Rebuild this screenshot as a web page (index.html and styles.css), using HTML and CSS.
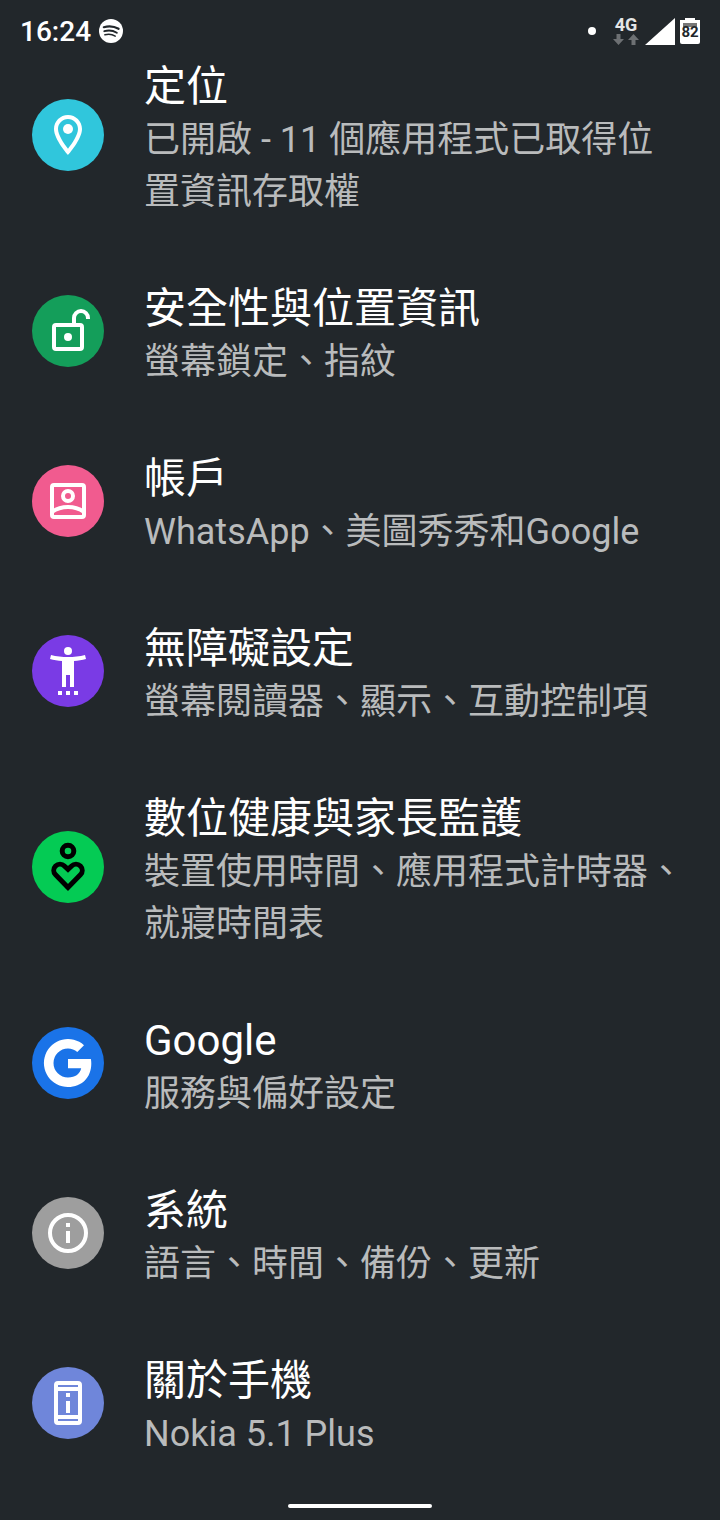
FILE: index.html
```html
<!DOCTYPE html>
<html lang="zh-TW">
<head>
    <meta charset="UTF-8">
    <meta name="viewport" content="width=device-width, initial-scale=1.0">
    <title>設定</title>
    <link rel="stylesheet" href="styles.css">
</head>
<body>
    <header class="status-bar">
        <span class="clock">16:24</span>
        <svg class="spotify" viewBox="0 0 24 24">
            <circle cx="12" cy="12" r="12" fill="#fff"/>
            <g class="waves">
                <path d="M4.8 8.2c5-1.4 10.4-.9 14.8 1.6" stroke-width="2.2"/>
                <path d="M5.3 12.2c4.2-1.2 8.8-.7 12.5 1.5" stroke-width="1.9"/>
                <path d="M5.9 15.8c3.6-.9 7.2-.6 10.3 1.3" stroke-width="1.5"/>
            </g>
        </svg>

        <div class="status-right">
            <span class="dot"></span>
            <div class="network">
                <span class="network-type">4G</span>
                <svg class="arrows" viewBox="0 0 26 11">
                    <path d="M3.500 0h4v5H11l-5.500 6L0 5h3.500z"/>
                    <path d="M18.500 11h4V6H26l-5.500-6L15 6h3.500z"/>
                </svg>
            </div>
            <svg class="signal" viewBox="0 0 30 27">
                <path d="M30 0v27H0z" fill="#fff"/>
            </svg>
            <div class="battery">82</div>
        </div>
    </header>

    <main class="settings-list">
        <a class="item" href="#location">
            <span class="icon location">
                <svg viewBox="0 0 24 24">
                    <path d="M12 2C8.13 2 5 5.13 5 9c0 5.25 7 13 7 13s7-7.75 7-13c0-3.87-3.13-7-7-7zM7 9c0-2.76 2.24-5 5-5s5 2.24 5 5c0 2.88-2.88 7.19-5 9.88C9.92 16.21 7 11.85 7 9z"/>
                    <circle cx="12" cy="9" r="2.5"/>
                </svg>
            </span>
            <span class="text">
                <span class="title">定位</span>
                <span class="summary">已開啟 - 11 個應用程式已取得位置資訊存取權</span>
            </span>
        </a>

        <a class="item" href="#security">
            <span class="icon security">
                <svg viewBox="0 0 24 24">
                    <rect class="line" x="5" y="9" width="14" height="12" rx="1"/>
                    <path class="line" d="M15 9V5.5a3.5 3.5 0 0 1 7 0V6"/>
                    <circle cx="12" cy="15" r="2"/>
                </svg>
            </span>
            <span class="text">
                <span class="title">安全性與位置資訊</span>
                <span class="summary">螢幕鎖定、指紋</span>
            </span>
        </a>

        <a class="item" href="#accounts">
            <span class="icon accounts">
                <svg viewBox="0 0 24 24">
                    <rect class="line" x="4" y="4" width="16" height="16" rx="1"/>
                    <circle class="line" cx="12" cy="9.5" r="2.5"/>
                    <path class="line" d="M4 17.5c4.500-3.300 11.500-3.300 16 0"/>
                </svg>
            </span>
            <span class="text">
                <span class="title">帳戶</span>
                <span class="summary">WhatsApp、美圖秀秀和Google</span>
            </span>
        </a>

        <a class="item" href="#accessibility">
            <span class="icon accessibility">
                <svg viewBox="0 0 24 24">
                    <circle cx="12" cy="2" r="2"/>
                    <path d="M20.5 4c-2.61.7-5.67 1-8.5 1s-5.89-.3-8.5-1L3 6c1.86.5 4 .83 6 1v13h2v-6h2v6h2V7c2-.17 4.14-.5 6-1z"/>
                    <path d="M7 22h2v2H7zM11 22h2v2h-2zM15 22h2v2h-2z"/>
                </svg>
            </span>
            <span class="text">
                <span class="title">無障礙設定</span>
                <span class="summary">螢幕閱讀器、顯示、互動控制項</span>
            </span>
        </a>

        <a class="item" href="#wellbeing">
            <span class="icon wellbeing">
                <svg viewBox="0 0 24 24">
                    <circle cx="12" cy="4" r="2.9"/>
                    <path d="M12 22.2l-6.2-6.3a3.1 3.1 0 0 1 4.4-4.4L12 13.2l1.8-1.7a3.1 3.1 0 0 1 4.4 4.4z"/>
                </svg>
            </span>
            <span class="text">
                <span class="title">數位健康與家長監護</span>
                <span class="summary">裝置使用時間、應用程式計時器、就寢時間表</span>
            </span>
        </a>

        <a class="item" href="#google">
            <span class="icon google">
                <svg viewBox="0 0 48 48">
                    <path d="M40 6.2A24 24 0 1 0 24 48c14 0 23.3-9.5 23.3-23.5 0-1.600-.1-3-.4-4.500H24v9.300h13.200c-1.200 5.500-5.600 9.200-13.200 9.200a14.500 14.500 0 0 1 0-29c3.500 0 6.800 1.200 9.300 3.500z"/>
                </svg>
            </span>
            <span class="text">
                <span class="title">Google</span>
                <span class="summary">服務與偏好設定</span>
            </span>
        </a>

        <a class="item" href="#system">
            <span class="icon system">
                <svg viewBox="0 0 24 24">
                    <circle class="line" cx="12" cy="12" r="9"/>
                    <path d="M11 7h2v2h-2zM11 11h2v6h-2z"/>
                </svg>
            </span>
            <span class="text">
                <span class="title">系統</span>
                <span class="summary">語言、時間、備份、更新</span>
            </span>
        </a>

        <a class="item" href="#about">
            <span class="icon about">
                <svg viewBox="0 0 24 24">
                    <path fill-rule="evenodd" d="M7 1h10a2 2 0 0 1 2 2v18a2 2 0 0 1-2 2H7a2 2 0 0 1-2-2V3a2 2 0 0 1 2-2zM7 3v1h10V3zM7 6v12h10V6zM7 20v1h10v-1z"/>
                    <path d="M11 7h2v2h-2zM11 11h2v6h-2z"/>
                </svg>
            </span>
            <span class="text">
                <span class="title">關於手機</span>
                <span class="summary">Nokia 5.1 Plus</span>
            </span>
        </a>
    </main>

    <div class="home-bar"></div>
</body>
</html>
```

FILE: styles.css
```css
* {
    margin: 0;
    padding: 0;
    box-sizing: border-box;
}

body {
    font-family: Roboto, "Noto Sans CJK TC", sans-serif;
    background: #22272b;
    color: #fff;
    min-height: 100vh;
    display: flex;
    flex-direction: column;
}

/* stays on top of the scrolled list */
.status-bar {
    position: fixed;
    top: 0;
    left: 0;
    right: 0;
    height: 62px;
    padding: 0 20px;
    display: flex;
    align-items: center;
    gap: 8px;
    background: #22272b;
}

.clock {
    padding-top: 2px;
    font-size: 28px;
    font-weight: 500;
    line-height: 32px;
}

.spotify {
    width: 24px;
    height: 24px;
}

.waves {
    fill: none;
    stroke: #22272b;
    stroke-linecap: round;
}

.status-right {
    margin-left: auto;
    display: flex;
    align-items: center;
}

.dot {
    width: 8px;
    height: 8px;
    margin-right: 17px;
    border-radius: 50%;
    background: #fff;
}

.network {
    display: flex;
    flex-direction: column;
    align-items: center;
    gap: 1px;
    margin-right: 6px;
}

.network-type {
    font-size: 18px;
    font-weight: 700;
    line-height: 16px;
    color: #e4e5e6;
}

.arrows {
    width: 26px;
    height: 11px;
    fill: #6d7073;
}

.signal {
    width: 30px;
    height: 27px;
    margin-right: 5px;
}

.battery {
    width: 20px;
    height: 26px;
    border-radius: 2px;
    background: linear-gradient(#22272b, #22272b) 0 0 / 5px 2px no-repeat,
        linear-gradient(#22272b, #22272b) 100% 0 / 5px 2px no-repeat,
        linear-gradient(#777, #777) 50% 5px / 14px 4px no-repeat,
        #fff;
    color: #22272b;
    font-size: 15px;
    font-weight: 700;
    line-height: 28px;
    text-align: center;
}

.settings-list {
    padding-top: 24px;
}

.item {
    display: flex;
    align-items: center;
    gap: 40px;
    padding: 28px 32px;
    color: inherit;
    text-decoration: none;
}

.icon {
    flex: none;
    width: 72px;
    height: 72px;
    border-radius: 50%;
    display: flex;
    align-items: center;
    justify-content: center;
}

.icon svg {
    width: 48px;
    height: 48px;
    fill: #fff;
    overflow: visible;
}

.icon .line {
    fill: none;
    stroke: #fff;
    stroke-width: 2;
}

.location {
    background: #30c6dc;
}

.security {
    background: #149e5a;
}

.accounts {
    background: #f15b8f;
}

.accessibility {
    background: #7a3be5;
}

.wellbeing {
    background: #04cb54;
}

.icon.wellbeing svg {
    fill: none;
    stroke: #000;
    stroke-width: 2.5;
}

.google {
    background: #1a73e8;
}

.system {
    background: #9e9e9e;
}

.about {
    background: #6f86da;
}

.text {
    flex: 1;
    min-width: 0;
    padding-top: 8px;
}

.title,
.summary {
    display: block;
}

.title {
    font-size: 42px;
    line-height: 54px;
}

.summary {
    font-size: 36px;
    line-height: 52px;
    color: #b9bbbc;
}

.home-bar {
    width: 20%;
    height: 4px;
    margin: auto auto 12px;
    border-radius: 2px;
    background: #fff;
}
```
